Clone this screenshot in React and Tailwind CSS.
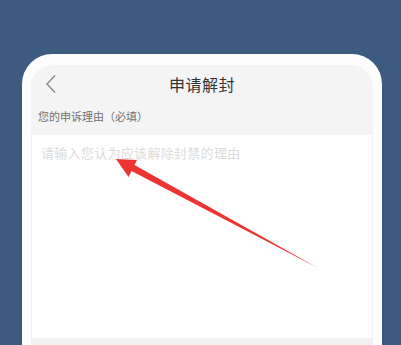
import React from "react";

const font = { fontFamily: '"Noto Sans CJK SC", "Noto Sans", sans-serif' };

// Red annotation arrow pointing at the placeholder text
const Arrow = () => (
    <svg
        className="absolute left-0 top-0 pointer-events-none"
        width="401"
        height="345"
        viewBox="0 0 401 345"
    >
        <polygon
            points="116,159 137,160 134.5,165 318,268 131.5,171 128.5,177"
            fill="#ee3430"
        />
    </svg>
);

const App = () => {
    return (
        <div
            className="relative w-[401px] h-[345px] overflow-hidden bg-[#3d5a80] pt-[54px] pl-[22px]"
            style={font}
        >
            <div className="w-[360px] h-[300px] bg-[#fdfdfd] rounded-t-[30px] pt-[11px] px-[9px]">
                <div className="w-[342px] h-full flex flex-col rounded-t-[22px] bg-[#f4f4f4] overflow-hidden">
                    <div className="relative h-[38px] flex items-center justify-center">
                        <svg
                            className="absolute left-[14px] top-[9px]"
                            width="12"
                            height="20"
                            viewBox="0 0 12 20"
                        >
                            <polyline
                                points="10,1.5 2,10 10,18.5"
                                fill="none"
                                stroke="#8a8a8a"
                                strokeWidth="1.4"
                            />
                        </svg>
                        <span className="text-[16px] text-[#333] leading-none tracking-[0.5px]">
                            申请解封
                        </span>
                    </div>
                    <div className="h-[32px] flex items-center pl-[7px] pb-[6px]">
                        <span className="text-[11px] text-[#707070] leading-none">
                            您的申诉理由（必填）
                        </span>
                    </div>
                    <div className="h-[203px] bg-white border-x border-[#f2f2f2] pl-[9px] pt-[4px]">
                        <span className="text-[13px] text-[#dcdcdc] leading-none tracking-[0.3px]">
                            请输入您认为应该解除封禁的理由
                        </span>
                    </div>
                    <div className="flex-1 bg-[#f1f1f1]" />
                </div>
            </div>
            <Arrow />
        </div>
    );
};

export default App;
